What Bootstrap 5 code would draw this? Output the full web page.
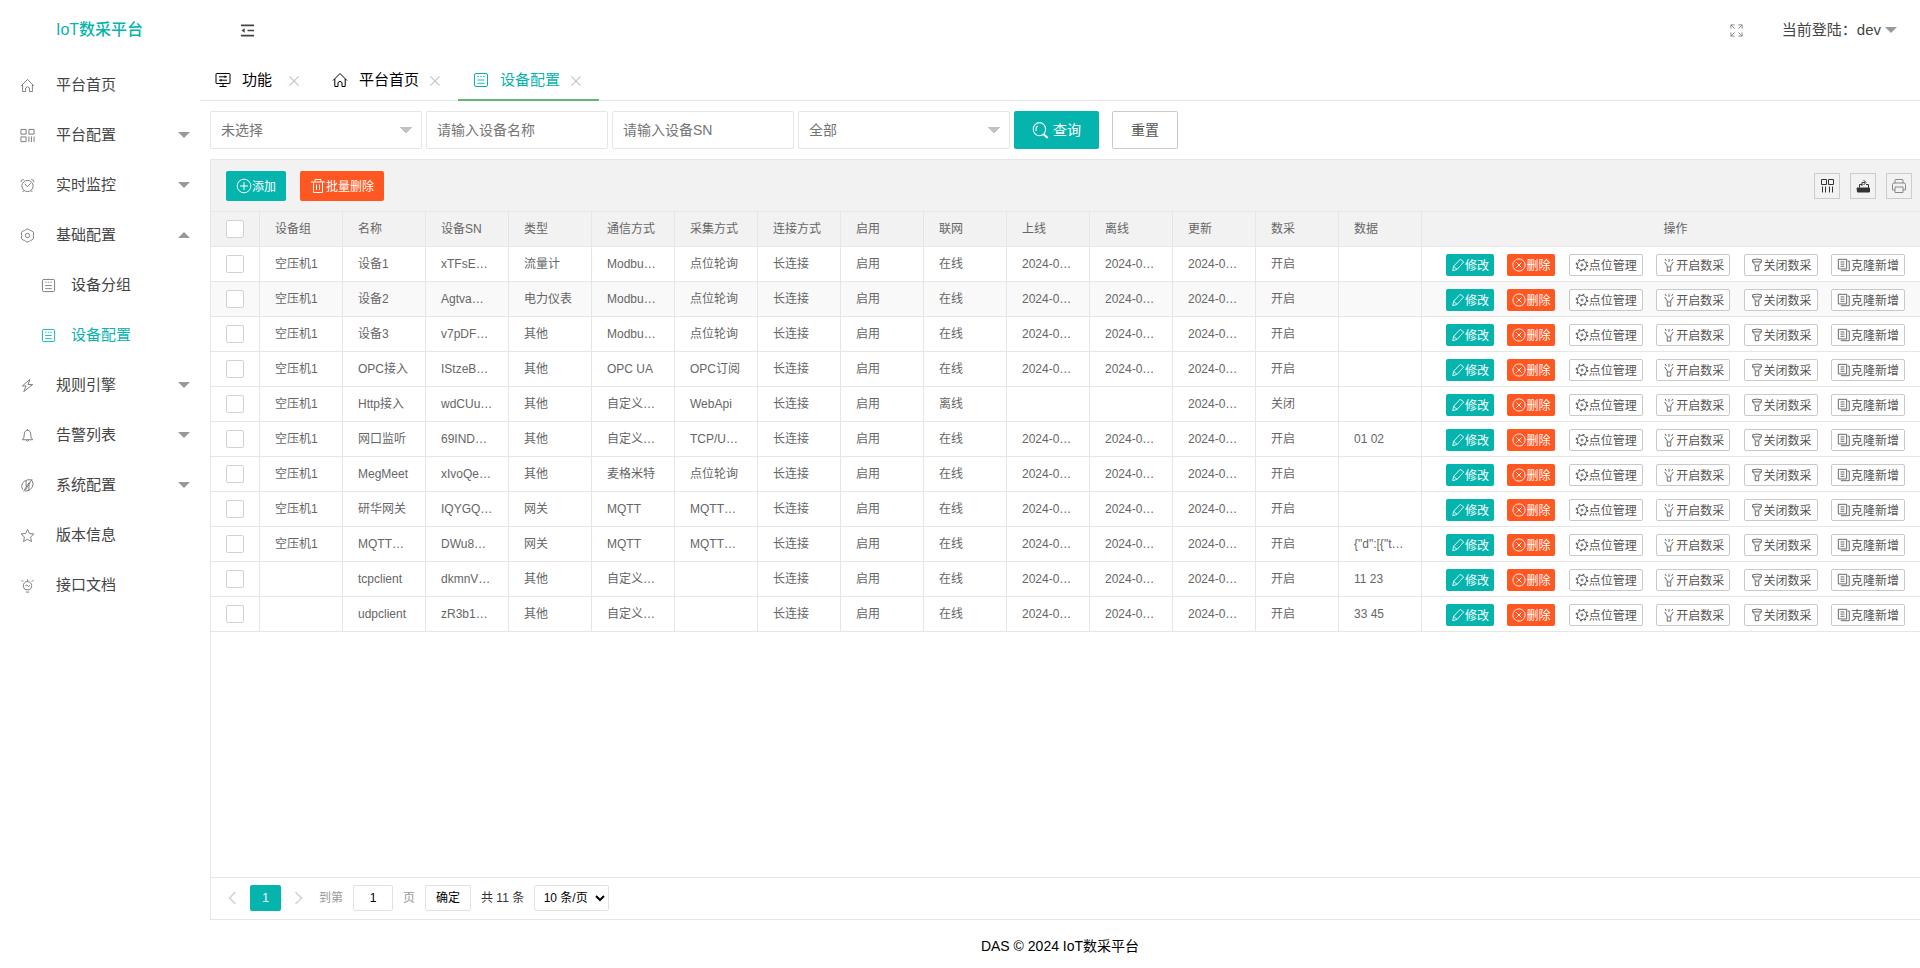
<!DOCTYPE html>
<html lang="zh-CN">
<head>
<meta charset="utf-8">
<meta name="viewport" content="width=device-width, initial-scale=1">
<title>IoT数采平台</title>
<link href="https://cdn.jsdelivr.net/npm/bootstrap@5.3.0/dist/css/bootstrap.min.css" rel="stylesheet">
<style>
:root{--teal:#06b4ae;--orange:#ff5722;--line:#e6e6e6}
body{font-family:"Liberation Sans","Noto Sans CJK SC",sans-serif;font-size:14px;line-height:24px;color:#000;background:#fff}
a{text-decoration:none;color:inherit}
svg{fill:none;stroke:currentColor;flex:none;display:block}
.side{width:200px;flex:none}
.brand{height:60px;padding-left:56px;font-size:16px;font-weight:500;color:var(--teal)}
.side-link{height:50px;padding:0 10px 0 20px;font-size:15px;color:#444}
.side-link svg{width:15px;height:15px;margin-right:21px;color:#777}
.side-link.sub{padding-left:41px}
.side-link.sub svg{margin-right:15px}
.side-link.current,.side-link.current svg{color:var(--teal)}
.tri{width:0;height:0;border:6px solid transparent;border-top-color:#999;border-bottom-width:0}
.tri.up{border-top-width:0;border-bottom:6px solid #999}
.topbar{height:60px;padding:0 23px 0 40px;color:#444;font-size:15px}
.full-link{margin-right:38px;color:#888}
.tabs{height:41px;border-bottom:1px solid var(--line);font-size:15px}
.tab-item{height:41px;padding:0 18px 0 15px;gap:11px;border-bottom:2px solid transparent}
.tab-item.current{border-bottom-color:#5fb878;color:var(--teal)}
.tab-name{min-width:36px}
.tab-close{border:0;background:none;padding:3px 0 0;color:#c2c2c2}
.filters{padding:10px;gap:4px}
.fld{height:38px;border:1px solid var(--line);border-radius:2px;padding:0 10px;font-size:14px;color:#757575;background-color:#fff}
.fld::placeholder{color:#757575;opacity:1}
.fld-text{width:182px}
.fld-pick{width:212px;appearance:none;background-image:linear-gradient(to bottom right,#c2c2c2 50%,transparent 51%),linear-gradient(to bottom left,#c2c2c2 50%,transparent 51%);background-size:6px 6px;background-position:right 9px center,right 15px center;background-repeat:no-repeat}
.act{border:0;border-radius:2px;color:#fff;background:var(--teal);white-space:nowrap;display:inline-flex;align-items:center;justify-content:center}
.act.warn{background:var(--orange)}
.act.plain{background:#fff;border:1px solid #c9c9c9;color:#555}
.act-lg{height:38px;padding:0 18px;font-size:14px}
.act-lg.plain{margin-left:9px}
.act-sm{height:30px;padding:2px 10px 0;font-size:12px}
.act-xs{height:22px;padding:2px 5px 0;font-size:12px}
.act-sm svg,.act-xs svg{margin-bottom:2px}
.grid-box{margin-left:10px;border:1px solid var(--line);border-right:0;color:#666}
.grid-tools{height:52px;padding:0 8px 0 15px;background:#f2f2f2;border-bottom:1px solid var(--line)}
.act-set{gap:14px}
.tool-set{gap:10px}
.tool{width:26px;height:26px;padding:0;border:1px solid #ccc;background:none;color:#333;display:flex;align-items:center;justify-content:center}
.tool.dim{color:#888}
.dev-table{width:100%;min-width:1700px;table-layout:fixed;border-collapse:separate;border-spacing:0;font-size:12px;line-height:24px}
.dev-table th{background:#f2f2f2;font-weight:400}
.dev-table th,.dev-table td{height:35px;padding:0 15px;border-right:1px solid var(--line);border-bottom:1px solid var(--line);white-space:nowrap;overflow:hidden}
.dev-table th:last-child,.dev-table td:last-child{padding:0 15px 0 24px;border-right:0}
.dev-table td:last-child{padding-top:2px}
.dev-table tbody tr:nth-child(2){background:#f9f9f9}
.col-tick{width:49px}
.col-std{width:83px}
.tick{appearance:none;display:block;width:18px;height:18px;margin:0;border:1px solid #d2d2d2;border-radius:2px;background:#fff}
.tick:checked{background:var(--teal)}
.pager{height:42px;padding:0 15px 2px;border-top:1px solid var(--line);font-size:12px;color:#333}
.bit{height:26px;border:1px solid #e2e2e2;border-radius:2px;background:#fff;color:#000;font-size:12px;line-height:24px;text-align:center;padding:0}
.arrow{border:0;background:none;color:#d2d2d2;padding:0;width:12px;height:26px;display:flex;align-items:center;justify-content:center}
.now{width:31px;margin:0 12px;border:0;background:var(--teal);color:#fff;line-height:26px}
.to{margin-left:14px}
.to,.unit{color:#999}
.page-no{width:40px;margin:0 10px}
.go{width:46px;margin:0 10px}
.size{width:75px;margin-left:10px}
.foot{height:48px;line-height:52px;text-align:center}
</style>
</head>
<body>
<svg width="0" height="0" class="position-absolute" aria-hidden="true">
<symbol id="home" viewBox="0 0 16 16"><path d="M1 8.500 8 1.500l7 7M2.800 7v7.500h3.200V10.500q2-2.400 4 0v4h3.200V7"/></symbol>
<symbol id="apps" viewBox="0 0 16 16"><path d="M1 1.500h5.500v5H1zM9.500 1.500H15v5H9.500zM1 9.500h5.500v5H1zM9.500 9v6M12.200 9v6M15 9v6"/></symbol>
<symbol id="clock" viewBox="0 0 16 16"><circle cx="8" cy="8.500" r="6"/><path d="M5 6.200 7.800 9.200 11.500 5.500M1 4.500Q1 1.800 4 1.500M15 4.500Q15 1.800 12 1.500M4 13.500 3 15M12 13.500 13 15"/></symbol>
<symbol id="gear" viewBox="0 0 16 16"><path d="M6 1.700q2-1.400 4 0 .8 1.500 2.600 1.400 2.300 1 2 3.300-1 1.600 0 3.200.3 2.300-2 3.300-1.800-.1-2.600 1.400-2 1.400-4 0-.8-1.500-2.600-1.400-2.300-1-2-3.300 1-1.600 0-3.200-.3-2.300 2-3.300Q5.200 3.200 6 1.700z"/><circle cx="8" cy="8" r="2.300"/></symbol>
<symbol id="doc" viewBox="0 0 16 16"><rect x="1.500" y="1.500" width="13" height="13" rx="1.500"/><path d="M4.500 4.500H6M7.300 4.500h1.400M10 4.500h1.500M4.500 8h7M4.500 11.300h7" stroke-width=".9"/></symbol>
<symbol id="bolt" viewBox="0 0 16 16"><path d="M10.500 1.500 2.500 8.500h4l-2.500 6L13.500 7h-5z"/></symbol>
<symbol id="bell" viewBox="0 0 16 16"><path d="M8 1v1.500M2.500 12.500q2-1.500 2-5Q4.500 2.500 8 2.500t3.500 5q0 3.500 2 5zM6.500 13q1.500 2.500 3 0"/></symbol>
<symbol id="leaf" viewBox="0 0 16 16"><path d="M3 12.500Q0 7.500 4.500 3.500 8 1 13 2q-3 2-5.500 6T4 14.500M13 3q2 3.500 0 7-3 4.500-7.500 4M11 4.500 5.500 13M9.500 6v7M6.500 3v6"/></symbol>
<symbol id="star" viewBox="0 0 16 16"><path d="m8 1.500 2 4.300 4.800.6-3.500 3.200.9 4.800L8 12l-4.200 2.400.9-4.800L1.200 6.400 6 5.800z"/></symbol>
<symbol id="bulb" viewBox="0 0 16 16"><path d="M5.500 12.500Q3.500 10.500 3.500 8.300a4.500 4.500 0 0 1 9 0q0 2.200-2 4.200zM6.300 15h3.400M8 1.500v2M1.500 2l2 2M14.500 2l-2 2M5.500 8.500l1.500-1 2 1.500 1.500-1"/></symbol>
<symbol id="screen" viewBox="0 0 16 16"><path d="M1.500 1.500h13q.5 0 .5.500v9q0 .500-.5.500h-13q-.5 0-.5-.500V2q0-.500.5-.500zM4 4.800h8M4 8.200h8M10 3.500v2.500M6 7v2.500M8 11.500v3M4.500 14.500h7"/></symbol>
<symbol id="shrink" viewBox="0 0 16 16"><path d="M1 2.500h14M8 8h7M1 13.500h14" stroke-width="1.700"/><path d="M5 5.600v4.800L1.500 8z" fill="currentColor" stroke="none"/></symbol>
<symbol id="full" viewBox="0 0 16 16"><path d="M2 6V2h4M2 2l4 4M10 2h4v4M14 2l-4 4M2 10v4h4M2 14l4-4M14 10v4h-4M14 14l-4-4"/></symbol>
<symbol id="cross" viewBox="0 0 12 12"><path d="m.500.500 11 11M11.500.500l-11 11" stroke-width="1.300"/></symbol>
<symbol id="find" viewBox="0 0 16 16"><ellipse cx="7" cy="6.800" rx="5.800" ry="6.200"/><path d="M4 8.500Q3 5.500 5.500 3.800"/><path d="m11 11.500 3.800 3.600" stroke-width="2"/></symbol>
<symbol id="plus" viewBox="0 0 16 16"><circle cx="8" cy="8" r="6.800"/><path d="M8 4v8M4 8h8"/></symbol>
<symbol id="bin" viewBox="0 0 16 16"><path d="M1 4h14M5 4V1.500h6V4M3.500 4v10.500h9V4M6.500 6.500v5.500M9.500 6.500v5.500"/></symbol>
<symbol id="pen" viewBox="0 0 16 16"><path d="m2 14.500 1-5L10.500 1.500l4 3L7 13z"/><path d="m3 9.500 4 3.500"/></symbol>
<symbol id="circx" viewBox="0 0 16 16"><circle cx="8" cy="8" r="7"/><path d="m5 5 6 6M11 5l-6 6"/></symbol>
<symbol id="cog" viewBox="0 0 16 16"><circle cx="8" cy="8" r="5.200"/><circle cx="8" cy="8" r="6.500" stroke-width="1.600" stroke-dasharray="2.100 3"/><circle cx="8" cy="8" r="1.200"/></symbol>
<symbol id="torch-on" viewBox="0 0 16 16"><path d="M3 4.500 6 9v6h4V9l3-4.500M8 1v3.500M3.500 1l1.500 2.500M12.500 1 11 3.500M8 9v2.500"/></symbol>
<symbol id="torch-off" viewBox="0 0 16 16"><path d="M3 2q5-1.500 10 0v2.500L10 8v6.500H6V8L3 4.500zM3 4.500h10M8 7.500v3"/></symbol>
<symbol id="copy" viewBox="0 0 16 16"><path d="M1.500 1.500H11v11H1.500zM4 4.500h4.500M4 7h4.500M4 9.500h4.500M4.500 14.500h9.500V3.500h-2"/></symbol>
<symbol id="cols" viewBox="0 0 16 16"><path d="M2.500 1.500h5v5h-5zM9.500 1.500h5v5h-5zM3.500 8.500v6M6.500 8.500v6M10.500 8.500v6M13.500 8.500v6"/></symbol>
<symbol id="export" viewBox="0 0 16 16"><path d="M2 10h12.500v4H2.500z" fill="currentColor"/><path d="M4.500 9.500V6.500h2.500M13.500 10V6.500H11M7 8V4.500h3M8.500 2l2.500 2.500L8.500 7"/></symbol>
<symbol id="print" viewBox="0 0 16 16"><path d="M4 5V2q0-.500.500-.500h7q.500 0 .5.500v3M4 12H1.500V6.500Q1.500 5 3 5h10q1.500 0 1.500 1.500V12H12M4 9h8v5.500H4z"/></symbol>
<symbol id="left" viewBox="0 0 12 14"><path d="M9.500 1 3.500 7l6 6" stroke-width="1.500"/></symbol>
<symbol id="right" viewBox="0 0 12 14"><path d="m2.500 1 6 6-6 6" stroke-width="1.500"/></symbol>
</svg>

<div class="d-flex min-vh-100">
<nav class="side">
  <div class="brand d-flex align-items-center">IoT数采平台</div>
  <div id="menu"></div>
</nav>

<div class="flex-grow-1 d-flex flex-column overflow-hidden">
  <header class="topbar d-flex align-items-center justify-content-between">
    <a href="#" aria-label="收起菜单"><svg width="15" height="15"><use href="#shrink"/></svg></a>
    <div class="d-flex align-items-center">
      <a href="#" class="full-link" aria-label="全屏"><svg width="15" height="15"><use href="#full"/></svg></a>
      <a href="#" class="d-flex align-items-center">当前登陆：dev<span class="tri ms-1"></span></a>
    </div>
  </header>

  <div class="tabs d-flex">
    <div class="tab-item d-flex align-items-center"><svg width="16" height="16"><use href="#screen"/></svg><a href="#" class="tab-name">功能</a><button class="tab-close" aria-label="关闭"><svg width="10" height="10"><use href="#cross"/></svg></button></div>
    <div class="tab-item d-flex align-items-center"><svg width="16" height="16"><use href="#home"/></svg><a href="#" class="tab-name">平台首页</a><button class="tab-close" aria-label="关闭"><svg width="10" height="10"><use href="#cross"/></svg></button></div>
    <div class="tab-item current d-flex align-items-center"><svg width="16" height="16"><use href="#doc"/></svg><a href="#" class="tab-name">设备配置</a><button class="tab-close" aria-label="关闭"><svg width="10" height="10"><use href="#cross"/></svg></button></div>
  </div>

  <form class="filters d-flex flex-wrap">
    <select class="fld fld-pick" aria-label="设备组"><option>未选择</option></select>
    <input class="fld fld-text" type="text" placeholder="请输入设备名称" aria-label="设备名称">
    <input class="fld fld-text" type="text" placeholder="请输入设备SN" aria-label="设备SN">
    <select class="fld fld-pick" aria-label="状态"><option>全部</option></select>
    <button type="button" class="act act-lg gap-1"><svg width="17" height="17"><use href="#find"/></svg>查询</button>
    <button type="reset" class="act act-lg plain">重置</button>
  </form>

  <section class="grid-box flex-grow-1 d-flex flex-column">
    <div class="grid-tools d-flex align-items-center justify-content-between">
      <div class="d-flex act-set">
        <button class="act act-sm"><svg width="16" height="16"><use href="#plus"/></svg>添加</button>
        <button class="act act-sm warn"><svg width="16" height="16"><use href="#bin"/></svg>批量删除</button>
      </div>
      <div class="d-flex tool-set">
        <button class="tool" aria-label="筛选列"><svg width="16" height="16"><use href="#cols"/></svg></button>
        <button class="tool" aria-label="导出"><svg width="16" height="16"><use href="#export"/></svg></button>
        <button class="tool dim" aria-label="打印"><svg width="16" height="16"><use href="#print"/></svg></button>
      </div>
    </div>
    <div class="flex-grow-1 overflow-auto">
      <table class="dev-table">
        <colgroup><col class="col-tick"><col class="col-std" span="14"><col></colgroup>
        <thead><tr><th><input type="checkbox" class="tick" aria-label="全选"></th><th>设备组</th><th>名称</th><th>设备SN</th><th>类型</th><th>通信方式</th><th>采集方式</th><th>连接方式</th><th>启用</th><th>联网</th><th>上线</th><th>离线</th><th>更新</th><th>数采</th><th>数据</th><th class="text-center">操作</th></tr></thead>
        <tbody id="rows"></tbody>
      </table>
    </div>
    <div class="pager d-flex align-items-center">
      <button class="arrow" aria-label="上一页"><svg width="12" height="14"><use href="#left"/></svg></button>
      <button class="bit now">1</button>
      <button class="arrow" aria-label="下一页"><svg width="12" height="14"><use href="#right"/></svg></button>
      <label for="page" class="to">到第</label>
      <input id="page" class="bit page-no" type="text" value="1">
      <span class="unit">页</span>
      <button class="bit go">确定</button>
      <span>共 11 条</span>
      <select class="bit size" aria-label="每页条数"><option>10 条/页</option></select>
    </div>
  </section>
  <footer class="foot">DAS © 2024 IoT数采平台</footer>
</div>
</div>
<script src="https://cdn.jsdelivr.net/npm/bootstrap@5.3.0/dist/js/bootstrap.bundle.min.js"></script>
<script>
const icon = (id, s) => `<svg width="${s}" height="${s}"><use href="#${id}"/></svg>`;
const menu = [
  ['home','平台首页',''],['apps','平台配置','down'],['clock','实时监控','down'],['gear','基础配置','up'],
  ['doc','设备分组','sub'],['doc','设备配置','sub current'],
  ['bolt','规则引擎','down'],['bell','告警列表','down'],['leaf','系统配置','down'],['star','版本信息',''],['bulb','接口文档','']
];
document.getElementById('menu').innerHTML = menu.map(([i, t, k]) => {
  const arrow = k === 'down' || k === 'up';
  return `<a href="#" class="side-link d-flex align-items-center ${arrow ? '' : k}">${icon(i, 15)}${t}${arrow ? `<span class="tri ms-auto ${k}"></span>` : ''}</a>`;
}).join('');

const D = '2024-0…';
const rows = [
  ['空压机1','设备1','xTFsE…','流量计','Modbu…','点位轮询','在线',D,D,'开启',''],
  ['空压机1','设备2','Agtva…','电力仪表','Modbu…','点位轮询','在线',D,D,'开启',''],
  ['空压机1','设备3','v7pDF…','其他','Modbu…','点位轮询','在线',D,D,'开启',''],
  ['空压机1','OPC接入','IStzeB…','其他','OPC UA','OPC订阅','在线',D,D,'开启',''],
  ['空压机1','Http接入','wdCUu…','其他','自定义…','WebApi','离线','','','关闭',''],
  ['空压机1','网口监听','69IND…','其他','自定义…','TCP/U…','在线',D,D,'开启','01 02'],
  ['空压机1','MegMeet','xIvoQe…','其他','麦格米特','点位轮询','在线',D,D,'开启',''],
  ['空压机1','研华网关','IQYGQ…','网关','MQTT','MQTT…','在线',D,D,'开启',''],
  ['空压机1','MQTT…','DWu8…','网关','MQTT','MQTT…','在线',D,D,'开启','{"d":[{"t…'],
  ['','tcpclient','dkmnV…','其他','自定义…','','在线',D,D,'开启','11 23'],
  ['','udpclient','zR3b1…','其他','自定义…','','在线',D,D,'开启','33 45']
];
const acts = [['pen','修改',''],['circx','删除','warn'],['cog','点位管理','plain'],['torch-on','开启数采','plain'],['torch-off','关闭数采','plain'],['copy','克隆新增','plain']];
const actCell = `<td><div class="d-flex justify-content-between">${acts.map(([i, t, c]) => `<button class="act act-xs ${c}">${icon(i, 14)}${t}</button>`).join('')}</div></td>`;
document.getElementById('rows').innerHTML = rows.map(r => {
  const cells = [...r.slice(0, 6), '长连接', '启用', r[6], r[7], r[8], D, r[9], r[10]];
  return `<tr><td><input type="checkbox" class="tick" aria-label="选择 ${r[1]}"></td>${cells.map(c => `<td>${c}</td>`).join('')}${actCell}</tr>`;
}).join('');
</script>
</body>
</html>
